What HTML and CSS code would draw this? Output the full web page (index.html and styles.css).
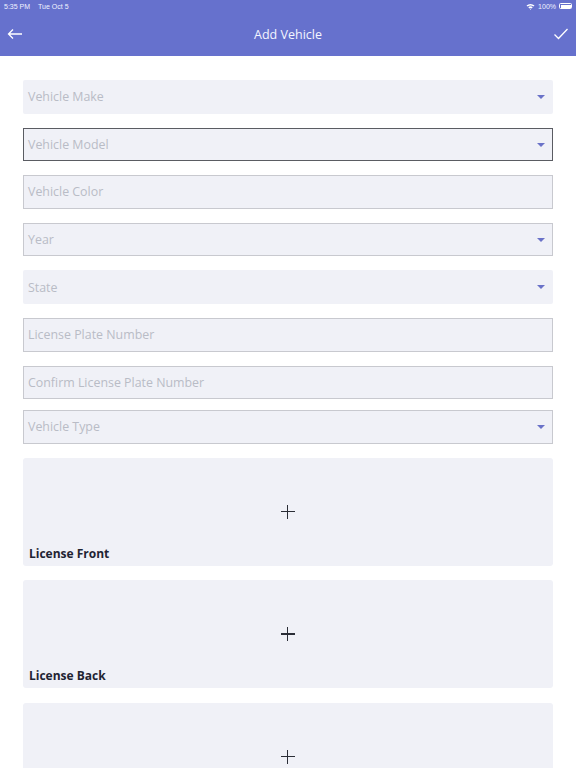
FILE: index.html
```html
<!DOCTYPE html>
<html>
<head>
<meta charset="utf-8">
<title>Add Vehicle</title>
<link rel="stylesheet" href="styles.css">
</head>
<body>

<div class="header">
	<div class="statusBar">
		<span class="time">5:35 PM</span>
		<span class="date">Tue Oct 5</span>
		<span class="spacer"></span>
		<svg class="wifi" width="9" height="7" viewBox="0 0 9 7"><path d="M0.5 2.5 A6 6 0 0 1 8.5 2.5 L7.4 3.6 A4.5 4.5 0 0 0 1.6 3.6 Z M2.3 4.3 A3.3 3.3 0 0 1 6.7 4.3 L5.6 5.4 A1.8 1.8 0 0 0 3.4 5.4 Z M4.5 7 L3.9 6.1 A0.9 0.9 0 0 1 5.1 6.1 Z" fill="#fff"/></svg>
		<span class="battery">100%</span>
		<span class="batteryIcon"><span class="batteryFill"></span></span>
	</div>
	<div class="navBar">
		<svg class="navIcon" width="16" height="12" viewBox="0 0 16 12"><path d="M15 6 H1.5 M6 1.5 L1.5 6 L6 10.5" fill="none" stroke="#fff" stroke-width="1.3"/></svg>
		<div class="title">Add Vehicle</div>
		<svg class="navIcon" width="16" height="12" viewBox="0 0 16 12"><path d="M1.5 6.5 L5.5 10.5 L14.5 1" fill="none" stroke="#fff" stroke-width="1.3"/></svg>
	</div>
</div>

<div class="content">
	<div class="field select">Vehicle Make<span class="arrow"></span></div>
	<div class="field select focused">Vehicle Model<span class="arrow"></span></div>
	<div class="field bordered">Vehicle Color</div>
	<div class="field select bordered">Year<span class="arrow"></span></div>
	<div class="field select">State<span class="arrow"></span></div>
	<div class="field bordered">License Plate Number</div>
	<div class="field bordered">Confirm License Plate Number</div>
	<div class="field select bordered typeField">Vehicle Type<span class="arrow"></span></div>

	<div class="photoCard">
		<div class="plus"></div>
		<div class="cardLabel">License Front</div>
	</div>
	<div class="photoCard">
		<div class="plus"></div>
		<div class="cardLabel">License Back</div>
	</div>
	<div class="photoCard">
		<div class="plus"></div>
	</div>
</div>

</body>
</html>
```

FILE: styles.css
```css
* {margin:0; padding:0; box-sizing:border-box;}

body {font-family:"Open Sans", "Noto Sans", sans-serif; background:#fff; width:576px; height:768px; overflow:hidden;}

.header {background:#6671cd; color:#fff; height:56px;}
.statusBar {display:flex; align-items:center; height:12px; padding:0 4px; font-family:"Liberation Sans", sans-serif; font-size:7px; color:#f0f1ff;}
.statusBar .date {margin-left:8px;}
.statusBar .spacer {flex:1;}
.statusBar .wifi {margin-right:3px;}
.batteryIcon {display:inline-block; width:13px; height:6px; border:1px solid #fff; border-radius:1.5px; margin-left:3px; padding:0.5px;}
.batteryFill {display:block; height:100%; background:#fff;}

.navBar {display:flex; align-items:center; justify-content:space-between; height:44px; padding:0 7px 0 7px;}
.title {font-size:12.5px; color:#f4f5ff;}

.content {display:flex; flex-direction:column; height:712px; overflow:hidden; padding:24px 23px 0 23px;}

.field {position:relative; flex:none; height:33.6px; margin-bottom:14px; background:#f0f1f7; border:1px solid transparent; border-radius:2px; padding:0 4px; display:flex; align-items:center; font-size:12.4px; color:#b9bcc6;}
.field.bordered {border-color:#c8c9cf; border-radius:0;}
.field.focused {border-color:#5a5c62; border-radius:0;}
.field.typeField {margin-top:-3px;}
.arrow {position:absolute; right:7px; top:14px; width:0; height:0; border-left:4px solid transparent; border-right:4px solid transparent; border-top:4px solid #6a72c8;}

.photoCard {flex:none; display:flex; flex-direction:column; height:108px; margin-bottom:14.5px; background:#f0f1f7; border-radius:3px; padding:0 6px 4px 6px;}
.plus {position:relative; align-self:center; margin-top:47px; width:14px; height:14px;}
.plus:before, .plus:after {content:""; position:absolute; background:#2a2d36;}
.plus:before {left:0; right:0; top:6px; height:1.4px;}
.plus:after {top:0; bottom:0; left:6px; width:1.4px;}
.cardLabel {margin-top:auto; font-size:12px; font-weight:bold; color:#1f2433;}
```
